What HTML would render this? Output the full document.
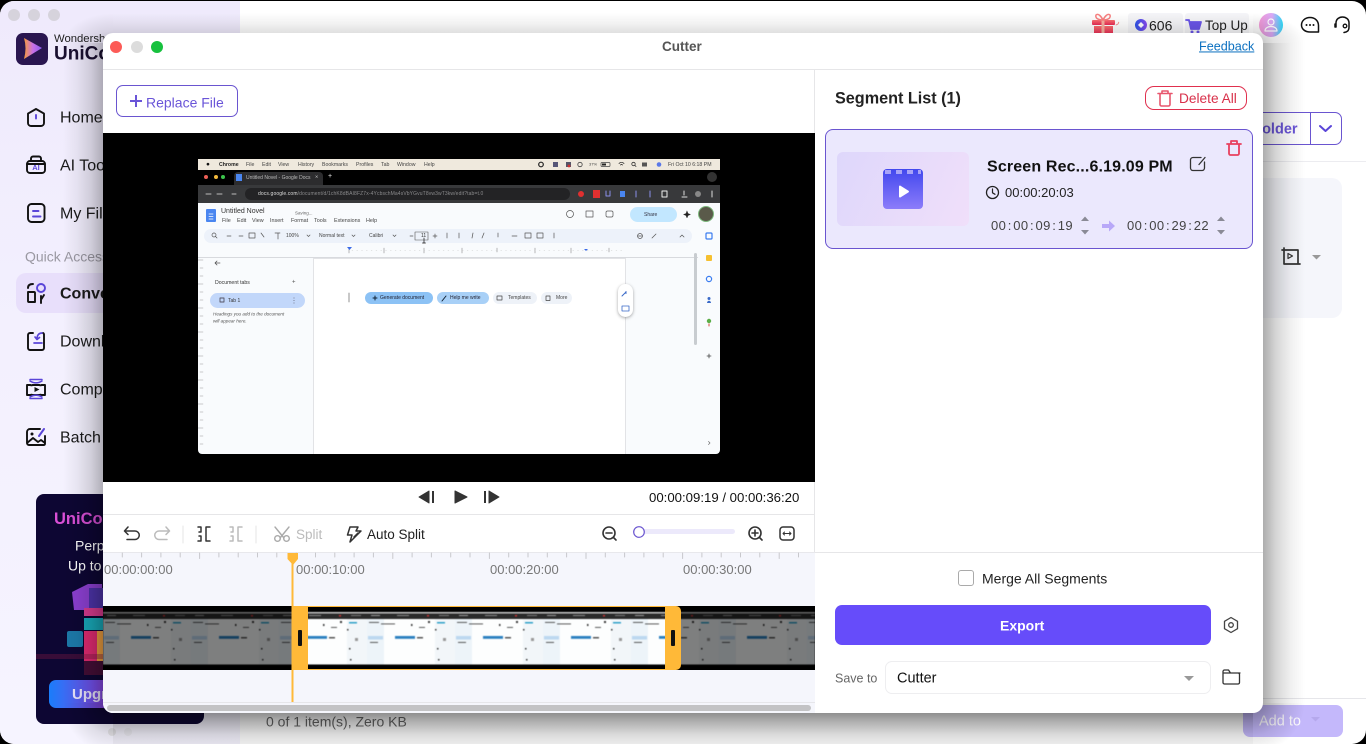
<!DOCTYPE html>
<html><head><meta charset="utf-8"><title>Cutter</title>
<style>
html,body{margin:0;padding:0;width:1366px;height:744px;overflow:hidden;background:#000;font-family:"Liberation Sans",sans-serif}
div{box-sizing:border-box}
.a{position:absolute}
.t{position:absolute;white-space:nowrap;transform:translateY(calc(-50% + 1px));line-height:1.2}
.in .t{transform:translateY(-50%)}
svg.o{position:absolute;left:0;top:0;width:1366px;height:744px;overflow:hidden}
.m{color:#444;font-size:5.2px}
.g{color:#444;font-size:5.4px}
</style></head>
<body>
<!-- main window -->
<div class="a" style="left:0;top:1px;width:1366px;height:743px;background:#fff;border-radius:14px;overflow:hidden">
  <div class="a" style="left:0;top:0;width:240px;height:743px;background:linear-gradient(180deg,#efeafc 0,#f3f0fe 45%,#f6f4ff 100%)"></div>
  <div class="a" style="left:16px;top:272px;width:110px;height:40px;background:#e8dffb;border-radius:10px"></div>
  <div class="a" style="left:36px;top:493px;width:168px;height:230px;background:#0d0633;border-radius:8px"></div>
  <div class="a" style="left:49px;top:679px;width:80px;height:28px;border-radius:7px;background:linear-gradient(90deg,#1a7dfa,#7a4ae8 60%,#c040c8)"></div>
  <div class="a" style="left:1128px;top:12px;width:55px;height:25px;background:#f5f5f8;border-radius:3px"></div>
  <div class="a" style="left:1185px;top:12px;width:64px;height:25px;background:#f5f5f8;border-radius:3px"></div>
  <div class="a" style="left:240px;top:160px;width:1126px;height:1px;background:#ececf0"></div>
  <div class="a" style="left:240px;top:697px;width:1126px;height:1px;background:#e6e6ea"></div>
  <div class="a" style="left:1200px;top:177px;width:142px;height:140px;background:#f5f6fb;border-radius:10px"></div>
  <div class="a" style="left:1200px;top:111px;width:142px;height:33px;border:1.2px solid #6a55d0;border-radius:7px"></div>
  <div class="a" style="left:1310px;top:111px;width:1.2px;height:33px;background:#6a55d0"></div>
  <div class="a" style="left:1243px;top:704px;width:100px;height:32px;background:#c4b8fb;border-radius:7px"></div>
</div>
<div class="t" style="left:54px;top:39px;font-size:11.300px;color:#222">Wondershare</div>
<div class="t" style="left:54px;top:54px;font-size:19px;font-weight:700;color:#1a1030">UniConverter</div>
<div class="t" style="left:60px;top:117px;font-size:16px;color:#1a1a1a">Home</div>
<div class="t" style="left:60px;top:165px;font-size:16px;color:#1a1a1a">AI Tools</div>
<div class="t" style="left:60px;top:213px;font-size:16px;color:#1a1a1a">My Files</div>
<div class="t" style="left:25px;top:256px;font-size:14px;color:#9a98a2">Quick Access</div>
<div class="t" style="left:60px;top:293px;font-size:16px;font-weight:700;color:#1a1a1a">Converter</div>
<div class="t" style="left:60px;top:341px;font-size:16px;color:#1a1a1a">Downloader</div>
<div class="t" style="left:60px;top:389px;font-size:16px;color:#1a1a1a">Compressor</div>
<div class="t" style="left:60px;top:437px;font-size:16px;color:#1a1a1a">Batch</div>
<div class="t" style="left:54px;top:519px;font-size:16.500px;font-weight:700;color:#d94fd6">UniConverter</div>
<div class="t" style="left:75px;top:545px;font-size:14px;color:#fff">Perpetual</div>
<div class="t" style="left:68px;top:565px;font-size:14px;color:#fff">Up to 50%</div>
<div class="t" style="left:72px;top:694px;font-size:15px;font-weight:700;color:#e8e4fb">Upgrade</div>
<div class="t" style="left:1149px;top:25px;font-size:14px;color:#222">606</div>
<div class="t" style="left:1205px;top:25px;font-size:13.500px;color:#222">Top Up</div>
<div class="t" style="left:1221px;top:128.500px;font-size:14.500px;font-weight:700;color:#6a55d8">Add Folder</div>
<div class="t" style="left:266px;top:721px;font-size:14px;color:#666">0 of 1 item(s), Zero KB</div>
<div class="t" style="left:1259px;top:721px;font-size:14.500px;color:#fff;opacity:.95">Add to</div>

<svg class="o" viewBox="0 0 1366 744" fill="none" stroke-linecap="round" stroke-linejoin="round">
  <defs>
    <linearGradient id="pl" x1="0" x2="1"><stop offset="0" stop-color="#f79a3a"/><stop offset=".5" stop-color="#c870e8"/><stop offset="1" stop-color="#8a5cf0"/></linearGradient>
    <linearGradient id="gf" x1="0" x2="0" y1="0" y2="1"><stop offset="0" stop-color="#fb7070"/><stop offset="1" stop-color="#ea2a55"/></linearGradient>
    <linearGradient id="av" x1="0" x2="1"><stop offset="0" stop-color="#f49ad8"/><stop offset=".55" stop-color="#d8a8f5"/><stop offset="1" stop-color="#28d8f5"/></linearGradient>
    <linearGradient id="co" x1="0" x2="1"><stop offset="0" stop-color="#2a55e8"/><stop offset="1" stop-color="#8a4af0"/></linearGradient>
  </defs>
  <g fill="#d6d3dc"><circle cx="14" cy="15" r="6"/><circle cx="34" cy="15" r="6"/><circle cx="54" cy="15" r="6"/></g>
  <rect x="16" y="33" width="32" height="32" rx="7" fill="#2a1650"/>
  <path d="M24 38 L42 48 L24 59 Q27 48 24 38Z" fill="url(#pl)"/>
  <!-- nav icons -->
  <g stroke="#111" stroke-width="1.9">
    <path d="M36 109l8 4.600v9.400a3 3 0 0 1-3 3H31a3 3 0 0 1-3-3v-9.400z"/>
    <rect x="27" y="161" width="18" height="12" rx="3"/>
    <path d="M31 161v-2.500a2 2 0 0 1 2-2h6a2 2 0 0 1 2 2V161M27 164h18"/>
    <rect x="28" y="204" width="16.500" height="18" rx="3.500"/>
    <path d="M35 296v-3a1 1 0 0 0-1-1h-6v9a1 1 0 0 0 1 1h6zM28 288c0-3 2-4 5-4M44 295l-2.500 4M41 296l0 7"/>
    <path d="M33 333h-3a2 2 0 0 0-2 2v13a2 2 0 0 0 2 2h12a2 2 0 0 0 2-2v-13a2 2 0 0 0-1-2"/>
    <path d="M27 385h3.500a2 2 0 0 0 2 0h7a2 2 0 0 0 2 0h3.500v10h-3.500a2 2 0 0 0-2 0h-7a2 2 0 0 0-2 0H27z"/>
    <path d="M40 429H30a3 3 0 0 0-3 3v11a2 2 0 0 0 2 2h15a1.500 1.500 0 0 0 1-1.500V436M27 443l6-5 5 4 3-2 4 3"/>
  </g>
  <path d="M36 115v3.500" stroke="#5a45d8" stroke-width="1.900"/>
  <path d="M33 211h5.500M33 216.500h7.500" stroke="#5a45d8" stroke-width="1.900"/>
  <text x="36" y="170" text-anchor="middle" font-size="7.500" font-weight="700" fill="#5a45d8" font-family="Liberation Sans">AI</text>
  <circle cx="41" cy="288" r="4" stroke="#5a45d8" stroke-width="1.900"/>
  <path d="M34 343h8M42 333c-3 0-5 2-5 6M35 337l2 2.500 2.500-2" stroke="#5a45d8" stroke-width="1.700"/>
  <path d="M30 381c4 2.500 8 2.500 12 0M30 379.500l12 0M30 397c4-2.500 8-2.500 12 0M30 398.500l12 0" stroke="#5a45d8" stroke-width="1.500"/>
  <path d="M34.500 387l5 2.500-5 2.500z" fill="#111"/>
  <circle cx="32" cy="434" r="1.500" fill="#111"/>
  <path d="M39 436l5-7" stroke="#5a45d8" stroke-width="2"/>
  <!-- promo art -->
  <path d="M72 592l16-8h14v26H74z" fill="#8b3fd0"/>
  <rect x="89" y="588" width="14" height="20" fill="#4c33a8"/>
  <rect x="84" y="608" width="19" height="8" fill="#d83a8e"/>
  <rect x="84" y="618" width="19" height="12" fill="#18a8b8"/>
  <rect x="84" y="631" width="14" height="30" fill="#e02a70"/>
  <rect x="97" y="631" width="6" height="30" fill="#f0a040"/>
  <rect x="67" y="631" width="16" height="16" rx="2" fill="#1c78a8"/>
  <rect x="36" y="654" width="67" height="5" fill="#7a1840" opacity=".4"/>
  <rect x="84" y="661" width="19" height="14" fill="#5c1238" opacity=".7"/>
  <g fill="#ddd" opacity=".7"><circle cx="112" cy="732" r="4"/><circle cx="128" cy="732" r="4" opacity=".5"/></g>
  <!-- header icons -->
  <rect x="1092" y="20" width="23" height="5" rx="1" fill="url(#gf)"/>
  <rect x="1094" y="26" width="19" height="8" fill="url(#gf)"/>
  <rect x="1101.500" y="20" width="3" height="14" fill="#f9b0a0"/>
  <path d="M1103 20c-5 0-8-2-7-5 2-2 5 1 7 5 2-4 5-7 7-5 1 3-2 5-7 5z" stroke="#f88080" stroke-width="1.500"/>
  <path d="M1116 25l2-1 .8-1.800" stroke="#f88080" stroke-width=".8"/>
  <circle cx="1141" cy="25" r="6" fill="url(#co)"/>
  <path d="M1141 22l3 3-3 3-3-3z" fill="#fff"/>
  <path d="M1186 20h3l2 9h8l2-7h-11.500" stroke="#6a55e8" stroke-width="1.800" fill="#6a55e8"/>
  <circle cx="1192" cy="32" r="1.500" fill="#6a55e8"/><circle cx="1198" cy="32" r="1.500" fill="#6a55e8"/>
  <circle cx="1271" cy="25" r="12" fill="url(#av)"/>
  <circle cx="1271" cy="22" r="3" stroke="#fff" stroke-width="1.200"/>
  <path d="M1265 31c0-6 12-6 12 0z" stroke="#fff" stroke-width="1.200"/>
  <path d="M1310 17.500c5 0 8.500 3.500 8.500 8v6.500h-8.500c-5 0-8.500-3-8.500-7s3.500-7.500 8.500-7.500z" stroke="#111" stroke-width="1.500"/>
  <g fill="#111"><circle cx="1306.500" cy="25" r="1"/><circle cx="1310" cy="25" r="1"/><circle cx="1313.500" cy="25" r="1"/></g>
  <path d="M1336 27v-4c0-8 13-8 13 0v4M1349 27c0 4-2 5-5 5.500M1335 24v3" stroke="#111" stroke-width="1.500"/>
  <circle cx="1345" cy="26" r="1.800" stroke="#111" stroke-width="1.300"/>
  <path d="M1320 126l5.500 5 5.500-5" stroke="#5a45d8" stroke-width="2"/>
  <!-- crop -->
  <path d="M1282 250h16v14M1284 248v16h16" stroke="#333" stroke-width="1.700"/>
  <path d="M1288 253.500l4.500 2.500-4.500 2.500z" stroke="#333" stroke-width="1.200"/>
  <path d="M1312 255h9l-4.500 4.500z" fill="#999"/>
  <path d="M1311 717h9l-4.500 4.500z" fill="#b4a6ea" opacity=".9"/>
</svg>

<!-- modal shadow, built from explicit gradient pieces -->
<div class="a" style="left:1263px;top:43px;width:42px;height:660px;background:linear-gradient(90deg,rgba(0,0,0,.32),rgba(0,0,0,.17) 30%,rgba(0,0,0,.06) 65%,transparent)"></div>
<div class="a" style="left:63px;top:43px;width:40px;height:660px;background:linear-gradient(270deg,rgba(0,0,0,.28),rgba(0,0,0,.14) 30%,rgba(0,0,0,.05) 65%,transparent)"></div>
<div class="a" style="left:113px;top:13px;width:1140px;height:20px;background:linear-gradient(0deg,rgba(0,0,0,.12),rgba(0,0,0,.05) 50%,transparent)"></div>
<div class="a" style="left:113px;top:713px;width:1140px;height:31px;background:linear-gradient(180deg,rgba(0,0,0,.44),rgba(0,0,0,.3) 30%,rgba(0,0,0,.14) 70%,rgba(0,0,0,.08))"></div>
<div class="a" style="left:1253px;top:703px;width:52px;height:41px;background:radial-gradient(ellipse 52px 50px at 0 0,rgba(0,0,0,.42),rgba(0,0,0,.28) 30%,rgba(0,0,0,.1) 65%,transparent)"></div>
<div class="a" style="left:63px;top:703px;width:50px;height:41px;background:radial-gradient(ellipse 50px 50px at 100% 0,rgba(0,0,0,.4),rgba(0,0,0,.26) 30%,rgba(0,0,0,.09) 65%,transparent)"></div>
<div class="a" style="left:1253px;top:13px;width:52px;height:30px;background:radial-gradient(ellipse 52px 30px at 0 100%,rgba(0,0,0,.3),rgba(0,0,0,.12) 40%,transparent)"></div>
<div class="a" style="left:63px;top:13px;width:50px;height:30px;background:radial-gradient(ellipse 50px 30px at 100% 100%,rgba(0,0,0,.26),rgba(0,0,0,.1) 40%,transparent)"></div>
<!-- modal -->
<div class="a" style="left:103px;top:33px;width:1160px;height:680px;background:#fff;border-radius:10px"></div>
<div class="a" style="left:103px;top:69px;width:1160px;height:1px;background:#e6e6e8"></div>
<div class="a" style="left:814px;top:70px;width:1px;height:643px;background:#e6e6e8"></div>
<div class="a" style="left:103px;top:133px;width:712px;height:349px;background:#000"></div>
<div class="a" style="left:103px;top:514px;width:712px;height:1px;background:#e6e6e8"></div>
<div class="a" style="left:103px;top:552px;width:712px;height:161px;background:#f5f6fc;border-radius:0 0 0 10px;border-top:1px solid #e8e8ec"></div>
<div class="a" style="left:815px;top:552px;width:448px;height:1px;background:#e6e6e8"></div>
<div class="a" style="left:107px;top:705px;width:704px;height:6px;background:#c3c3c5;border-radius:3px"></div>
<div class="a" style="left:103px;top:702px;width:712px;height:1px;background:#e6e6ea"></div>

<div class="t" style="left:662px;top:45.500px;font-size:13.500px;font-weight:700;color:#555">Cutter</div>
<div class="t" style="left:1199px;top:45.500px;font-size:12.600px;color:#0b70c0;text-decoration:underline">Feedback</div>
<div class="a" style="left:116px;top:85px;width:122px;height:32px;border:1.200px solid #6a55d0;border-radius:7px"></div>
<div class="t" style="left:146px;top:101.500px;font-size:14px;color:#6a55d8">Replace File</div>

<!-- inner screenshot -->
<div class="a in" style="left:198px;top:159px;width:522px;height:295px;overflow:hidden;border-radius:0 0 4px 4px;background:#f9fbfd">
<div class="a" style="left:-198px;top:-159px;width:1366px;height:744px;filter:blur(.35px)">
  <div class="a" style="left:198px;top:159px;width:522px;height:11px;background:#efe9dd"></div>
  <div class="a" style="left:198px;top:170px;width:522px;height:15px;background:#000"></div>
  <div class="a" style="left:234px;top:172px;width:89px;height:13px;background:#2c2c2e;border-radius:4px 4px 0 0"></div>
  <div class="a" style="left:198px;top:185px;width:522px;height:18px;background:#38393b"></div>
  <div class="a" style="left:245px;top:188px;width:325px;height:12px;background:#232325;border-radius:6px"></div>
  <div class="a" style="left:204px;top:229px;width:488px;height:14px;background:#edf2fa;border-radius:7px"></div>
  <div class="a" style="left:198px;top:257px;width:500px;height:1px;background:#d8dade"></div>
  <div class="a" style="left:313px;top:258px;width:313px;height:197px;background:#fff;border-left:1px solid #e2e3e6;border-right:1px solid #e2e3e6;border-top:1px solid #e2e3e6"></div>
  <div class="a" style="left:630px;top:207px;width:47px;height:15px;background:#c2e7ff;border-radius:8px"></div>
  <div class="a" style="left:210px;top:293px;width:95px;height:15px;background:#c2d7fa;border-radius:8px"></div>
  <div class="a" style="left:365px;top:292px;width:68px;height:12px;background:#8cc2f5;border-radius:6px"></div>
  <div class="a" style="left:437px;top:292px;width:52px;height:12px;background:#a8d0f7;border-radius:6px"></div>
  <div class="a" style="left:493px;top:292px;width:44px;height:12px;background:#eef2f8;border-radius:6px"></div>
  <div class="a" style="left:541px;top:292px;width:31px;height:12px;background:#eef2f8;border-radius:6px"></div>
  <div class="a" style="left:618px;top:284px;width:15px;height:33px;background:#fff;border-radius:8px;box-shadow:0 1px 3px rgba(0,0,0,.35)"></div>
  <div class="a" style="left:694px;top:253px;width:3px;height:92px;background:#c8ccd0;border-radius:2px"></div>
  <div class="a" style="left:206px;top:209px;width:10px;height:13px;background:#4a86f0;border-radius:1px"></div>
  <div class="t m" style="left:206px;top:164.500px;color:#111;font-size:6.500px">●</div>
  <div class="t m" style="left:219px;top:164.500px;color:#222;font-weight:700">Chrome</div>
  <div class="t m" style="left:246px;top:164.500px">File</div>
  <div class="t m" style="left:262px;top:164.500px">Edit</div>
  <div class="t m" style="left:278px;top:164.500px">View</div>
  <div class="t m" style="left:298px;top:164.500px">History</div>
  <div class="t m" style="left:322px;top:164.500px">Bookmarks</div>
  <div class="t m" style="left:356px;top:164.500px">Profiles</div>
  <div class="t m" style="left:381px;top:164.500px">Tab</div>
  <div class="t m" style="left:397px;top:164.500px">Window</div>
  <div class="t m" style="left:424px;top:164.500px">Help</div>
  <div class="t m" style="left:668px;top:164.500px">Fri Oct 10 6:18 PM</div>
  <div class="t m" style="left:589px;top:164.500px;font-size:4px">37%</div>
  <div class="t" style="left:246px;top:177.500px;font-size:5px;color:#bbb">Untitled Novel - Google Docs</div>
  <div class="t" style="left:315px;top:177.500px;font-size:5.500px;color:#ccc">×</div>
  <div class="t" style="left:328px;top:177px;font-size:7px;color:#eee">+</div>
  <div class="t" style="left:258px;top:194px;font-size:5px;color:#8a8a8c;letter-spacing:.12px"><span style="color:#ddd">docs.google.com</span>/document/d/1chK8dBAI8FZ7x-4YcbschMa4sVbYGvuT8vw3wT3kw/edit?tab=t.0</div>
  <div class="t" style="left:221px;top:212px;font-size:7px;color:#333">Untitled Novel</div>
  <div class="t" style="left:295px;top:212.500px;font-size:4.500px;color:#666">Saving...</div>
  <div class="t g" style="left:222px;top:220.500px">File</div>
  <div class="t g" style="left:237px;top:220.500px">Edit</div>
  <div class="t g" style="left:252px;top:220.500px">View</div>
  <div class="t g" style="left:270px;top:220.500px">Insert</div>
  <div class="t g" style="left:291px;top:220.500px">Format</div>
  <div class="t g" style="left:314px;top:220.500px">Tools</div>
  <div class="t g" style="left:334px;top:220.500px">Extensions</div>
  <div class="t g" style="left:366px;top:220.500px">Help</div>
  <div class="t" style="left:286px;top:236px;font-size:5px;color:#444">100%</div>
  <div class="t" style="left:319px;top:236px;font-size:5px;color:#444">Normal text</div>
  <div class="t" style="left:369px;top:236px;font-size:5px;color:#444">Calibri</div>
  <div class="t" style="left:421px;top:236px;font-size:5px;color:#333">11</div>
  <div class="t" style="left:215px;top:283px;font-size:5.200px;color:#333">Document tabs</div>
  <div class="t" style="left:292px;top:283px;font-size:6px;color:#555">+</div>
  <div class="t" style="left:228px;top:300.500px;font-size:5px;color:#333">Tab 1</div>
  <div class="t" style="left:213px;top:314px;font-size:4.600px;color:#555;font-style:italic">Headings you add to the document</div>
  <div class="t" style="left:213px;top:321px;font-size:4.600px;color:#555;font-style:italic">will appear here.</div>
  <div class="t" style="left:380px;top:298px;font-size:5px;color:#223">Generate document</div>
  <div class="t" style="left:450px;top:298px;font-size:5px;color:#223">Help me write</div>
  <div class="t" style="left:508px;top:298px;font-size:5px;color:#444">Templates</div>
  <div class="t" style="left:556px;top:298px;font-size:5px;color:#444">More</div>
  <div class="t" style="left:644px;top:214.500px;font-size:5px;color:#334">Share</div>
  <svg class="o" viewBox="0 0 1366 744" fill="none" stroke-linecap="round" stroke-linejoin="round">
    <circle cx="541" cy="164.500" r="2.300" stroke="#222" stroke-width="1.200"/>
    <rect x="553" y="162" width="5" height="5" fill="#557"/><rect x="566" y="162" width="5" height="5" fill="#556"/><circle cx="569" cy="166" r="1.400" fill="#d03030"/>
    <circle cx="580" cy="164.500" r="2.200" stroke="#444" stroke-width=".8"/>
    <rect x="601" y="162.500" width="9" height="4" rx="1" stroke="#444" stroke-width=".7"/><rect x="602" y="163.500" width="4" height="2" fill="#222"/>
    <path d="M619 163.500c1.500-1.500 3.500-1.500 5 0M620.500 165c.8-.8 1.200-.8 2 0" stroke="#222" stroke-width=".8"/>
    <circle cx="633.500" cy="164" r="1.700" stroke="#333" stroke-width=".8"/><path d="M635 165.500l1 1" stroke="#333" stroke-width=".8"/>
    <rect x="642" y="162.500" width="5" height="4" fill="#555"/>
    <circle cx="659" cy="164.500" r="2.300" fill="#5a78e8"/>
    <g fill="#ec5f56"><circle cx="206" cy="177" r="2"/></g><circle cx="216" cy="177" r="2" fill="#f2b93c"/><circle cx="223" cy="177" r="2" fill="#3cc44c"/>
    <rect x="236" y="174" width="6" height="7" fill="#4a86f0"/>
    <path d="M206 194h5M217 194h5M232 194h4" stroke="#bbb" stroke-width="1"/>
    <circle cx="712" cy="177" r="5" fill="#333"/>
    <g fill="#e03030"><circle cx="581" cy="194" r="3"/><rect x="593" y="190" width="7" height="8"/></g>
    <path d="M606 191v5h4v-5M636 191v6M650 191v6" stroke="#8a8fe8" stroke-width="1"/>
    <rect x="620" y="191" width="5" height="6" fill="#4a86f0"/>
    <rect x="662" y="191" width="5" height="6" stroke="#eee"/>
    <path d="M684 191v4M682 197h5M712 191v6" stroke="#ddd" stroke-width="1"/>
    <circle cx="698" cy="194" r="3" fill="#888"/>
    <path d="M209 214h4M209 216.500h4M209 219h4" stroke="#fff" stroke-width=".8"/>
    <g stroke="#555" stroke-width=".7">
      <circle cx="214" cy="235" r="2"/><path d="M215.500 236.500l1.500 1.500M227 236h4M239 236h4M249 233h6v5h-6zM261 233l3 4M275 233h5M278 233v6M307 235l1.500 1.500 1.500-1.500M352 235l1.500 1.500 1.500-1.500M393 235l1.500 1.500 1.500-1.500M410 236h3M433 236h4M435 234v4M447 233v5M459 233v5M473 233l-1 5M484 233l-2 5M498 233v4M512 236h5M525 233h6v5h-6zM537 233h6v5h-6zM554 233v5M638 236h4M652 238l4-4M680 237l2-2 2 2"/>
      <circle cx="640" cy="236" r="2.500"/>
      <circle cx="570" cy="214" r="3.500"/><rect x="586" y="211" width="7" height="6"/><rect x="606" y="211" width="7" height="6" rx="1.500"/>
    </g>
    <rect x="415" y="232" width="13" height="8" stroke="#555" stroke-width=".6"/>
    <path d="M424 238v5M422.500 243h3" stroke="#111" stroke-width=".7"/>
    <path d="M349 293v9" stroke="#777" stroke-width=".8"/>
    <path d="M217 263h5M217 263l2-2M217 263l2 2" stroke="#555" stroke-width=".8" transform="translate(-2 0)"/>
    <path d="M220 298h4v4h-4zM294 298v.01M294 300.500v.01M294 303v.01" stroke="#556" stroke-width=".9"/>
    <path d="M373 298h4M375 296v4" stroke="#123" stroke-width="1"/>
    <path d="M442 301l4-5" stroke="#123" stroke-width="1"/>
    <rect x="497" y="296" width="5" height="4" stroke="#444" stroke-width=".7"/>
    <rect x="546" y="296" width="4" height="4.500" stroke="#444" stroke-width=".7"/>
    <path d="M622 296l4-4M626 291.500v2" stroke="#3a6ac8" stroke-width="1"/>
    <rect x="622" y="306" width="7" height="5" stroke="#3a6ac8" stroke-width=".8"/>
    <path d="M687 211l1 2.500 2.500 1-2.500 1-1 2.500-1-2.500-2.500-1 2.500-1z" fill="#222" stroke="#222" stroke-width=".4"/>
    <circle cx="706" cy="214" r="7.500" fill="#5a5a4a"/><circle cx="706" cy="214" r="7.500" stroke="#7cb87c" stroke-width="1"/>
    <rect x="706" y="233" width="6" height="6" rx="1" stroke="#3a7cf0" stroke-width="1.200"/>
    <rect x="706" y="255" width="6" height="6" rx="1" fill="#f6c030"/>
    <circle cx="709" cy="279" r="2.600" stroke="#3a7cf0" stroke-width="1.200"/>
    <path d="M707 303c0-3 4-3 4 0z" fill="#3a6ac8"/><circle cx="709" cy="298.500" r="1.500" fill="#3a6ac8"/>
    <circle cx="709" cy="321" r="2.200" fill="#5cae48"/><path d="M709 324v2" stroke="#d84a3a"/>
    <path d="M707 356h4M709 354v4" stroke="#444" stroke-width=".8"/>
    <path d="M708.500 441.500l1.500 1.500-1.500 1.500" stroke="#666" stroke-width=".7"/>
    <path d="M349 248v5M384 248v5M424 248v5M462 248v5M497 248v4M535 248v5M571 248v5M609 248v4" stroke="#888" stroke-width=".6"/>
    <path d="M352 250.500h270" stroke="#ccc" stroke-width=".6" stroke-dasharray=".8 4"/>
    <path d="M347 247h5l-2.500 3z" fill="#3a6ae8"/><path d="M584 249h4l-2 2z" fill="#3a6ae8"/>
    <path d="M198 260h5M200 268h3M200 276h3M198 284h5M200 292h3M200 300h3M198 308h5M200 316h3M200 324h3M198 332h5M200 340h3M200 348h3M198 356h5M200 364h3M200 372h3M198 380h5M200 388h3M200 396h3M198 404h5M200 412h3M200 420h3M198 428h5M200 436h3M200 444h3" stroke="#999" stroke-width=".5"/>
  </svg>
</div></div>

<!-- controls -->
<div class="t" style="left:649px;top:497px;font-size:13.200px;color:#111">00:00:09:19 / 00:00:36:20</div>
<div class="t" style="left:296px;top:533.500px;font-size:13.500px;color:#bbb">Split</div>
<div class="t" style="left:367px;top:533.500px;font-size:13.500px;color:#222">Auto Split</div>
<div class="a" style="left:633px;top:529px;width:102px;height:5px;background:#ece9fb;border-radius:3px"></div>
<div class="t" style="left:104px;top:569px;font-size:13px;color:#777">00:00:00:00</div>
<div class="t" style="left:296px;top:569px;font-size:13px;color:#777">00:00:10:00</div>
<div class="t" style="left:490px;top:569px;font-size:13px;color:#777">00:00:20:00</div>
<div class="t" style="left:683px;top:569px;font-size:13px;color:#777">00:00:30:00</div>

<!-- strip -->
<div class="a" style="left:103px;top:606px;width:712px;height:64px;overflow:hidden;background:#000">
<svg class="a" style="left:0;top:0;filter:blur(.45px)" width="712" height="64" viewBox="0 0 712 64">
  <defs><pattern id="th" patternUnits="userSpaceOnUse" width="88" height="64">
    <rect width="88" height="64" fill="#000"/>
    <rect y="6" width="88" height="1.500" fill="#c8c8c8"/>
    <rect y="7.500" width="88" height="5.500" fill="#2a2a2a"/>
    <rect y="13" width="88" height="45.500" fill="#fdfefe"/>
    <rect y="13" width="17" height="45.500" fill="#edf4f9"/>
    <rect x="68" y="13" width="20" height="45.500" fill="#f2f6f9"/>
    <rect x="4" y="9" width="9" height="1" fill="#999"/><rect x="30" y="9" width="12" height="1" fill="#888"/><rect x="60" y="9" width="2" height="1.500" fill="#d03030"/><rect x="72" y="9" width="10" height="1" fill="#777"/>
    <g fill="#333"><rect x="2" y="16" width="10" height=".8"/><rect x="14" y="17.500" width="14" height=".8"/><rect x="44" y="18" width="1.500" height="2"/><rect x="61" y="15" width="2" height="2"/><rect x="52" y="21" width="6" height=".8"/><rect x="3" y="36" width="8" height=".8"/><rect x="68" y="23" width="1.500" height="1.500"/><rect x="70" y="42" width="1.500" height="1.500"/><rect x="71" y="53" width="1.500" height="1.500"/></g>
    <g fill="#2ea0c8"><rect x="70" y="16" width="8" height="1.500"/></g>
    <rect x="1" y="30" width="15" height="3.500" fill="#bcd8f0"/>
    <rect x="28" y="30" width="20" height="2.800" fill="#2a80c0"/>
    <rect x="50" y="31" width="6" height="1.500" fill="#555"/>
    <rect x="76" y="32" width="3" height="3" fill="#999"/>
  </pattern></defs>
  <rect width="712" height="64" fill="url(#th)"/>
</svg>
<div class="a" style="left:0;top:0;width:189px;height:64px;background:rgba(0,0,0,.5)"></div>
<div class="a" style="left:578px;top:0;width:134px;height:64px;background:rgba(0,0,0,.5)"></div>
</div>
<div class="a" style="left:308px;top:606px;width:357px;height:64px;border-top:1px solid #ffb938;border-bottom:1px solid #ffb938"></div>
<div class="a" style="left:292px;top:606px;width:16px;height:64px;background:#ffb938"></div>
<div class="a" style="left:665px;top:606px;width:16px;height:64px;background:#ffb938;border-radius:0 5px 5px 0"></div>
<div class="a" style="left:298px;top:630px;width:4px;height:16px;background:#111;border-radius:1px"></div>
<div class="a" style="left:671px;top:630px;width:4px;height:16px;background:#111;border-radius:1px"></div>

<!-- right panel -->
<div class="t" style="left:835px;top:98px;font-size:16.200px;font-weight:700;color:#222">Segment List (1)</div>
<div class="a" style="left:1145px;top:86px;width:102px;height:24px;border:1.200px solid #e0304e;border-radius:9px"></div>
<div class="t" style="left:1179px;top:98px;font-size:13.700px;color:#d8304a">Delete All</div>
<div class="a" style="left:825px;top:129px;width:428px;height:120px;background:#ebe8fd;border:1.200px solid #6a55d0;border-radius:8px"></div>
<div class="a" style="left:837px;top:152px;width:132px;height:74px;border-radius:6px;background:linear-gradient(115deg,#ded7fb,#f0dffa)"></div>
<div class="a" style="left:883px;top:169px;width:40px;height:40px;border-radius:4px;background:linear-gradient(180deg,#4248ee,#8c7cfa)"></div>
<div class="t" style="left:987px;top:166px;font-size:16px;font-weight:700;color:#111;letter-spacing:.15px">Screen Rec...6.19.09 PM</div>
<div class="t" style="left:1005px;top:192px;font-size:13px;color:#222">00:00:20:03</div>
<div class="t" style="left:991px;top:225px;font-size:13px;color:#444;letter-spacing:.35px;word-spacing:-2.400px">00 : 00 : 09 : 19</div>
<div class="t" style="left:1127px;top:225px;font-size:13px;color:#444;letter-spacing:.35px;word-spacing:-2.400px">00 : 00 : 29 : 22</div>

<div class="a" style="left:958px;top:570px;width:16px;height:16px;border:1px solid #aaa;border-radius:3px;background:#fff"></div>
<div class="t" style="left:982px;top:577.500px;font-size:14px;color:#222">Merge All Segments</div>
<div class="a" style="left:835px;top:605px;width:376px;height:40px;background:#664cfa;border-radius:7px"></div>
<div class="t" style="left:1000px;top:625px;font-size:14px;font-weight:700;color:#fff">Export</div>
<div class="t" style="left:835px;top:677.500px;font-size:12.500px;color:#666">Save to</div>
<div class="a" style="left:885px;top:661px;width:326px;height:33px;border:1px solid #eeeef0;border-radius:7px;background:#fff"></div>
<div class="t" style="left:897px;top:678px;font-size:14.500px;color:#111">Cutter</div>

<!-- front icons -->
<svg class="o" viewBox="0 0 1366 744" fill="none" stroke-linecap="round" stroke-linejoin="round">
  <circle cx="116" cy="47" r="6" fill="#fc5b57"/><circle cx="137" cy="47" r="6" fill="#dcdcdc"/><circle cx="157" cy="47" r="6" fill="#17c13e"/>
  <path d="M136 95v12M130 101h12" stroke="#6a55d8" stroke-width="2" stroke-linecap="butt"/>
  <!-- player -->
  <path d="M419 497l10-6v12z" fill="#333" stroke="#333"/><rect x="432" y="491" width="2" height="12" fill="#333"/>
  <path d="M455 491l12 6-12 6z" fill="#333" stroke="#333"/>
  <rect x="484" y="491" width="2" height="12" fill="#333"/>
  <path d="M489 491l10 6-10 6z" fill="#333" stroke="#333"/>
  <!-- toolbar -->
  <path d="M124.500 531h10.500a3.800 3.800 0 0 1 0 8.500h-8M124.500 531l3.500-4M124.500 531l3.500 3.500" stroke="#333" stroke-width="1.500"/>
  <path d="M169.500 531H159a3.800 3.800 0 0 0 0 8.500h8M169.500 531l-3.500-4M169.500 531l-3.500 3.500" stroke="#bbb" stroke-width="1.500"/>
  <path d="M183 526v17M256 526v17" stroke="#e4e4e6" stroke-width="1"/>
  <path d="M198 527h3v5h-2M198 541h3v-5h-2M210 527h-4v14h4" stroke="#333" stroke-width="1.500"/>
  <path d="M230 527h3v5h-2M230 541h3v-5h-2M242 527h-4v14h4" stroke="#bbb" stroke-width="1.500"/>
  <path d="M275 527l9 11M289 527l-9 11" stroke="#aaa" stroke-width="1.400"/>
  <circle cx="277.500" cy="538.500" r="2.800" stroke="#aaa" stroke-width="1.400"/><circle cx="286.500" cy="538.500" r="2.800" stroke="#aaa" stroke-width="1.400"/>
  <path d="M350 527h8l-2 4h5l-11 11 2-7h-4.500zM358 533l-4 4" stroke="#333" stroke-width="1.500"/>
  <circle cx="609" cy="533" r="6" stroke="#333" stroke-width="1.600"/><path d="M606 533h6M613.500 537.500l2.500 2.500" stroke="#333" stroke-width="1.600"/>
  <circle cx="755" cy="533" r="6" stroke="#333" stroke-width="1.600"/><path d="M752 533h6M755 530v6M759.500 537.500l2.500 2.500" stroke="#333" stroke-width="1.600"/>
  <rect x="780" y="527" width="14" height="13" rx="3" stroke="#333" stroke-width="1.500"/>
  <path d="M783 533.500h8M784.500 532l-1.500 1.500 1.500 1.500M789.500 532l1.500 1.500-1.500 1.500" stroke="#333" stroke-width="1"/>
  <circle cx="639" cy="532" r="5.300" fill="#fff" stroke="#6a55d0" stroke-width="1.200"/>
  <!-- ruler ticks -->
  <path d="M122.300 553v4M141.600 553v4M160.900 553v4M180.200 553v4M199.600 553v5.500M218.900 553v4M238.200 553v4M257.500 553v4M276.800 553v4M296.200 553v5.500M315.500 553v4M334.800 553v4M354.100 553v4M373.400 553v4M392.800 553v5.500M412.100 553v4M431.400 553v4M450.700 553v4M470 553v4M489.400 553v5.500M508.700 553v4M528 553v4M547.300 553v4M566.600 553v4M586 553v5.500M605.300 553v4M624.600 553v4M643.900 553v4M663.200 553v4M682.600 553v5.500M701.900 553v4M721.200 553v4M740.500 553v4M759.800 553v4M779.200 553v5.500M798.500 553v4" stroke="#c8c8cc" stroke-width="1"/>
  <path d="M292.500 560v142" stroke="#ffb938" stroke-width="2" stroke-linecap="butt"/>
  <path d="M287.500 553h10.500v6l-5 6-5.500-6z" fill="#ffb938"/>
  <!-- delete all -->
  <path d="M1158 93.500h14M1162 93.500v-2.500h6v2.500M1160 93.500v11a1.500 1.500 0 0 0 1.500 1.500h7a1.500 1.500 0 0 0 1.500-1.500v-11" stroke="#e8566e" stroke-width="1.600"/>
  <path d="M1227 144h14M1231 144v-3h6v3M1229 144v9.500a1.500 1.500 0 0 0 1.500 1.500h7a1.500 1.500 0 0 0 1.500-1.500V144" stroke="#e8405e" stroke-width="1.800"/>
  <!-- card -->
  <path d="M885 172h36" stroke="#a8a4f8" stroke-width="4" stroke-dasharray="6 5" stroke-linecap="butt"/>
  <path d="M899 186.500a1 1 0 0 1 1.500-.8l8 5a1 1 0 0 1 0 1.700l-8 5a1 1 0 0 1-1.500-.8z" fill="#fff"/>
  <path d="M1201 158h-8a2.500 2.500 0 0 0-2.500 2.500v8a2.500 2.500 0 0 0 2.500 2.500h9a2.500 2.500 0 0 0 2.500-2.500v-6M1199 165l6-7" stroke="#333" stroke-width="1.300" transform="translate(0 -.5)"/>
  <circle cx="992.500" cy="192.500" r="6" stroke="#222" stroke-width="1.300"/><path d="M992.500 189v3.800l2.500 1.500" stroke="#222" stroke-width="1.200"/>
  <g fill="#8a8a96"><path d="M1081 221l4-4.500 4 4.500zM1081 230l4 4.500 4-4.500z"/><path d="M1217 221l4-4.500 4 4.500zM1217 230l4 4.500 4-4.500z"/></g>
  <path d="M1102 224h7v-3.500l6 5.500-6 5.500V228h-7z" fill="#b8a8f8"/>
  <!-- footer -->
  <path d="M1231 617.500l6.500 3.800v7.400l-6.500 3.800-6.500-3.800v-7.400z" stroke="#444" stroke-width="1.300"/>
  <circle cx="1231" cy="625" r="2.300" stroke="#444" stroke-width="1.300"/>
  <path d="M1184 676h10l-5 5z" fill="#999"/>
  <path d="M1223 674v-2.500a1.500 1.500 0 0 1 1.500-1.500h4l2 3h7.500a1.500 1.500 0 0 1 1.500 1.500v8a1.500 1.500 0 0 1-1.500 1.500h-13.500a1.500 1.500 0 0 1-1.500-1.500V673h17" stroke="#333" stroke-width="1.300"/>
</svg>
</body></html>
